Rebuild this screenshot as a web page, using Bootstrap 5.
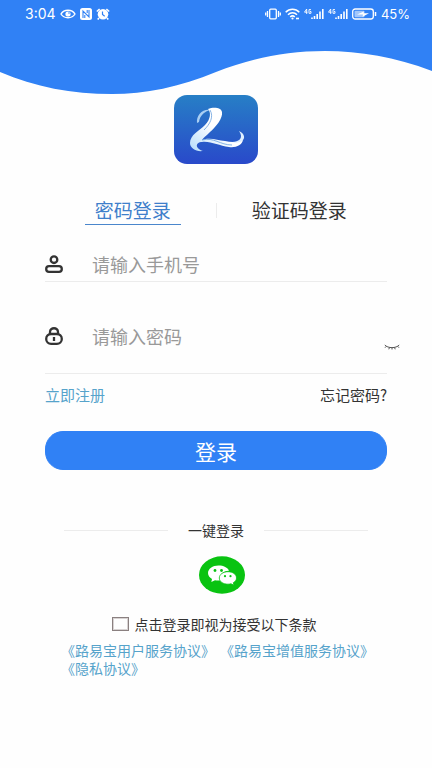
<!DOCTYPE html>
<html lang="zh-CN">
<head>
<meta charset="utf-8">
<meta name="viewport" content="width=device-width, initial-scale=1">
<title>登录</title>
<link rel="stylesheet" href="https://cdn.jsdelivr.net/npm/bootstrap@5.3.0/dist/css/bootstrap.min.css">
<style>
  :root { --brand: #3081f5; --sky: #56a3cb; --ink: #333; --rule: #ececec; }
  body { font-family: "Noto Sans CJK SC", sans-serif; color: var(--ink); background: #fefefe; }
  .status { background: var(--brand); height: 48px; padding: 4px 22px 0 25px; color: #fff; font: 14px/20px Inter, sans-serif; }
  .status svg { display: block; }
  .battery-level { font-size: 13px; }
  .wave { display: block; width: 100%; height: 47px; }
  .app-logo { display: block; width: 84px; height: 69px; margin: 0 auto; }
  .tabs { margin: 32px 50px 0; }
  .tab-link { border: 0; border-bottom: 1px solid transparent; background: none; padding: 0 10px; font-size: 19px; line-height: 28px; color: var(--ink); white-space: nowrap; }
  .tab-link.active { color: #3f7fcb; border-color: #4a86cc; }
  .tab-rule { width: 1px; height: 15px; background: var(--rule); }
  .login-form { margin: 0 45px; }
  .field { border-bottom: 1px solid var(--rule); gap: 29px; }
  .field-phone { margin-top: 25px; padding-bottom: 3px; }
  .field-pass { margin-top: 40px; padding-bottom: 23px; }
  .field input { border: 0; outline: 0; background: none; padding: 0; min-width: 0; font-size: 18px; line-height: 28px; height: 28px; color: var(--ink); }
  .field input::placeholder { color: #999; opacity: 1; }
  .field svg { display: block; }
  .eye { border: 0; background: none; padding: 0; margin: 0 -13px 0 0; }
  .helpers { margin-top: 9px; font-size: 15px; line-height: 24px; }
  .sky { color: var(--sky); }
  .submit { --bs-btn-color: #fff; --bs-btn-bg: var(--brand); --bs-btn-border-color: var(--brand); --bs-btn-hover-bg: #2774e4; --bs-btn-hover-color: #fff; margin-top: 24px; height: 39px; padding: 0; border-radius: 18px; font-size: 21px; line-height: 36px; }
  .quick { margin: 49px 64px 0; gap: 20px; font-size: 14px; line-height: 22px; }
  .quick-rule { height: 1px; background: var(--rule); }
  .wechat-row { padding-left: 12px; }
  .wechat { border: 0; background: none; padding: 0; margin-top: 15px; }
  .wechat svg { display: block; }
  .consent { margin-top: 19px; padding-right: 4px; gap: 6px; font-size: 14px; line-height: 22px; }
  .consent input { appearance: none; width: 17px; height: 14px; margin: 0; border: 1px solid #8a8080; outline: 1px solid #d8d3d3; outline-offset: -2px; }
  .consent input:checked { background: var(--brand); }
  .terms { margin: 6px 48px 0 61px; column-gap: 5px; font-size: 14px; line-height: 18px; }
</style>
<script src="https://cdn.jsdelivr.net/npm/bootstrap@5.3.0/dist/js/bootstrap.bundle.min.js"></script>
</head>
<body>
<header>
  <div class="status d-flex justify-content-between align-items-start">
    <div class="d-flex align-items-center gap-1">
      <span>3:04</span>
      <svg width="16" height="12" viewBox="0 0 16 12" fill="none" stroke="#fff" stroke-width="1.4"><path d="M1 6C4 1 12 1 15 6C12 11 4 11 1 6Z"/><circle cx="8" cy="6" r="2.6" fill="#fff" stroke="none"/><circle cx="9" cy="5" r=".8" fill="#3081f5" stroke="none"/></svg>
      <svg width="12" height="12" viewBox="0 0 12 12"><rect width="12" height="12" rx="2.5" fill="#fff"/><path d="M3 10V3L9 9V2M4.800 10V7M7.200 2V5" fill="none" stroke="#3081f5" stroke-width="1.1"/></svg>
      <svg width="14" height="12" viewBox="0 0 14 12"><circle cx="7" cy="6.300" r="5.300" fill="#fff"/><path d="M.8 3.500L3.600 1M13.200 3.500L10.400 1M3 10L1.700 11.500M11 10L12.300 11.500" stroke="#fff" stroke-width="1.6"/><path d="M6.500 3.500V6.500L8.700 8.200" fill="none" stroke="#3081f5" stroke-width="1.200"/></svg>
    </div>
    <div class="d-flex align-items-center gap-1">
      <svg width="16" height="12" viewBox="0 0 16 12" fill="none" stroke="#fff" stroke-width="1.300"><rect x="4.700" y="1.200" width="6.600" height="9.600" rx="1"/><path d="M2.500 3V9M.7 4.500V7.500M13.500 3V9M15.300 4.500V7.500"/></svg>
      <svg width="15" height="12" viewBox="0 0 15 12" fill="none" stroke="#fff" stroke-width="1.500"><path d="M.7 4.300C4.500.3 10.500.3 14.300 4.300M3 6.700C5.500 4.100 9.500 4.100 12 6.700M5.200 9C6.500 7.700 8.500 7.700 9.800 9"/><circle cx="7.500" cy="10.500" r="1.100" fill="#fff" stroke="none"/><path d="M11 10.500H14" stroke-width="1.600"/></svg>
      <svg width="20" height="12" viewBox="0 0 20 12" fill="none" stroke="#fff"><path d="M2.700 6V1L.5 4.200H3.500M7 1.600H5V5.300H7V3.500H6" stroke-width=".9"/><path d="M8 11V9.500M10.500 11V8M13.200 11V6M16 11V3.500M18.800 11V1" stroke-width="1.600"/></svg>
      <svg width="20" height="12" viewBox="0 0 20 12" fill="none" stroke="#fff"><path d="M2.700 6V1L.5 4.200H3.500M7 1.600H5V5.300H7V3.500H6" stroke-width=".9"/><path d="M8 11V9.500M10.500 11V8M13.200 11V6M16 11V3.500M18.800 11V1" stroke-width="1.600"/></svg>
      <svg width="25" height="12" viewBox="0 0 25 12"><rect x=".7" y="1" width="20.600" height="10" rx="2.500" fill="none" stroke="#fff" stroke-width="1.300"/><rect x="2.500" y="2.800" width="10" height="6.400" rx="1" fill="#fff" opacity=".55"/><path d="M5 6.500L12 3.500L11.500 5.300H17L10.500 8.700L11 6.500Z" fill="#fff"/><path d="M23.500 4V8" stroke="#fff" stroke-width="1.500"/></svg>
      <span class="battery-level">45%</span>
    </div>
  </div>
  <svg class="wave" viewBox="0 48 432 47" preserveAspectRatio="none" aria-hidden="true"><path fill="#3081f5" d="M0 47H432V71C395 57 360 51 325 51C285 51 250 59 216 72C180 87 145 94 112 94C72 94 35 87 0 72Z"/></svg>
</header>

<main>
  <svg class="app-logo" viewBox="0 0 84 69" role="img" aria-label="路易宝">
    <defs>
      <linearGradient id="tile" x1="0" y1="0" x2="0" y2="1"><stop offset="0" stop-color="#277fc6"/><stop offset="1" stop-color="#2949ca"/></linearGradient>
      <linearGradient id="stroke" x1="1" y1="0" x2="0" y2="1"><stop offset="0" stop-color="#fff"/><stop offset=".5" stop-color="#fff"/><stop offset="1" stop-color="#b4dcfa"/></linearGradient>
    </defs>
    <rect width="84" height="69" rx="13" fill="url(#tile)"/>
    <path fill="#a9cff3" d="M23 28C22 20 29 13 37 15C31 16 26 20 25 27Z"/>
    <path fill="url(#stroke)" d="M34 14C39 12 47 12 48 17C49 23 42 32 36 37C32 41 29 43 28 45C36 42 43 45 51 46C58 48 65 47 69 45C68 50 62 53 55 52C45 51 37 46 28 47C22 47 20 53 29 56C22 57 16 53 16 48C16 40 25 36 31 30C37 24 37 17 34 14Z"/>
    <path fill="#dff0ff" d="M65 36C70 38 72 43 68 46C65 48 61 48 58 47C65 47 70 43 65 36Z"/>
    <path fill="none" stroke="#679fdd" stroke-width=".8" d="M36 15C40 22 36 29 30 35M28 45C40 42 46 50 58 50"/>
  </svg>

  <div class="tabs row g-0 align-items-center" role="tablist">
    <div class="col text-center"><button class="tab-link active" type="button" role="tab" aria-selected="true">密码登录</button></div>
    <div class="col-auto tab-rule"></div>
    <div class="col text-center"><button class="tab-link" type="button" role="tab" aria-selected="false">验证码登录</button></div>
  </div>

  <form class="login-form">
    <div class="field field-phone d-flex align-items-center">
      <label for="phone" aria-label="手机号"><svg width="18" height="18" viewBox="0 0 18 18" fill="none" stroke="#333" stroke-width="2.300"><circle cx="9" cy="4.700" r="3.300"/><rect x="1.200" y="11.200" width="15.600" height="5.600" rx="2.800"/></svg></label>
      <input class="flex-grow-1" id="phone" type="tel" placeholder="请输入手机号">
    </div>
    <div class="field field-pass d-flex align-items-center">
      <label for="password" aria-label="密码"><svg width="18" height="18" viewBox="0 0 18 18" fill="none" stroke="#333" stroke-width="2.300"><path d="M5 7V5C5 0 13 0 13 5V7"/><rect x="1.200" y="7" width="15.600" height="9.800" rx="4.900"/><path d="M9 10V14"/></svg></label>
      <input class="flex-grow-1" id="password" type="password" placeholder="请输入密码">
      <button class="eye align-self-end" type="button" aria-label="显示密码"><svg width="16" height="6" viewBox="0 0 16 6" fill="none" stroke="#555" stroke-width="1"><path d="M.8 1C4 4.500 12 4.500 15.200 1M2.500 2.200L1 3.700M5.500 3.400L4.800 5.300M8 3.700V5.500M10.500 3.400L11.200 5.300M13.500 2.200L15 3.700"/></svg></button>
    </div>
    <div class="helpers d-flex justify-content-between">
      <a class="sky text-decoration-none" href="#">立即注册</a>
      <a class="text-reset text-decoration-none" href="#">忘记密码?</a>
    </div>
    <button class="submit btn w-100" type="submit">登录</button>
  </form>

  <div class="quick d-flex align-items-center">
    <span class="quick-rule flex-fill"></span><span>一键登录</span><span class="quick-rule flex-fill"></span>
  </div>
  <div class="wechat-row d-flex justify-content-center">
    <button class="wechat" type="button" aria-label="微信登录"><svg width="46" height="38" viewBox="0 0 46 38">
      <ellipse cx="23" cy="19" rx="23" ry="18.700" fill="#09c311"/>
      <path fill="#fff" d="M19.500 9.500C13.500 9.500 9 13 9 17C9 19.500 10.600 21.600 13 23L12.300 26L16 24.200C17.800 24.600 19.500 24.600 21 24.400C20 18.500 25 14.500 30 14.700C28.800 11.500 24.500 9.500 19.500 9.500Z"/>
      <path fill="#fff" d="M29 15.700C24 15.700 20.300 18.500 20.300 22C20.300 25.500 24 28.200 29 28.200C30 28.200 31 28 32 27.800L35 29.200L34.300 26.700C36.500 25.500 37.500 23.800 37.500 22C37.500 18.500 34 15.700 29 15.700Z" stroke="#09c311" stroke-width=".8"/>
      <g fill="#09c311"><circle cx="16" cy="14.500" r="1.400"/><circle cx="22.500" cy="14.500" r="1.400"/><circle cx="26" cy="20.200" r="1.100"/><circle cx="31.500" cy="20.200" r="1.100"/></g>
    </svg></button>
  </div>

  <div class="consent d-flex justify-content-center align-items-center">
    <input type="checkbox" id="agree"><label for="agree">点击登录即视为接受以下条款</label>
  </div>
  <div class="terms d-flex flex-wrap">
    <a class="sky text-decoration-none" href="#">《路易宝用户服务协议》</a>
    <a class="sky text-decoration-none" href="#">《路易宝增值服务协议》</a>
    <a class="sky text-decoration-none" href="#">《隐私协议》</a>
  </div>
</main>
</body>
</html>
